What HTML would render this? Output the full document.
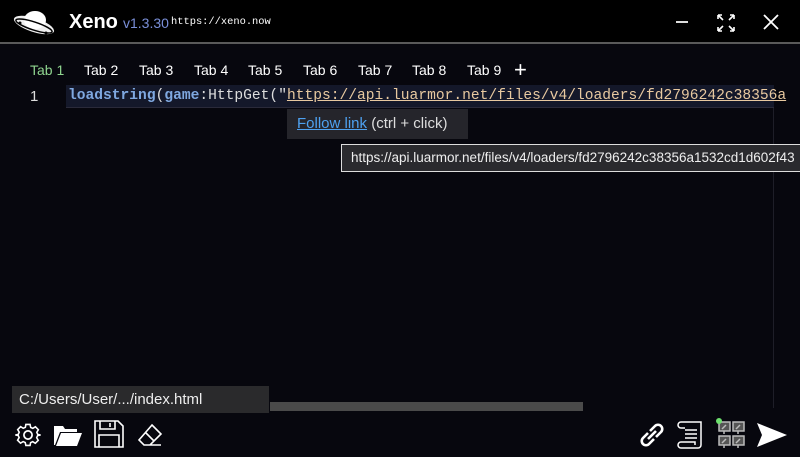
<!DOCTYPE html>
<html><head><meta charset="utf-8"><style>
*{margin:0;padding:0;box-sizing:border-box}
body{width:800px;height:457px;background:#000;overflow:hidden;position:relative;font-family:"Liberation Sans",sans-serif;color:#fff}
.abs{position:absolute}
.hr{left:0;top:42px;width:800px;height:2px;background:#5a5a5a}
.editor{left:0;top:44px;width:800px;height:413px;background:#07070e}
.tab{top:62px;font-size:14px;color:#fff}
.mono{font-family:"Liberation Mono",monospace;font-size:14.6px;white-space:pre}
</style></head><body>
<div class="abs editor"></div>
<div class="abs hr"></div>
<svg class="abs" style="left:10px;top:9px" width="48" height="28" viewBox="0 0 48 28">
<ellipse cx="24" cy="16" rx="21" ry="7" transform="rotate(18 24 16)" fill="#eee"/>
<ellipse cx="25" cy="11" rx="11" ry="9" fill="#fff"/>
<ellipse cx="24" cy="17" rx="19" ry="4" transform="rotate(18 24 17)" fill="none" stroke="#000" stroke-width="1.5"/>
<circle cx="10" cy="14" r="1.5" fill="#000"/><circle cx="36" cy="24" r="1.5" fill="#000"/><circle cx="45" cy="20" r="1.3" fill="#000"/>
</svg>
<div class="abs" style="left:69px;top:11px;font-size:20px;font-weight:bold">Xeno</div>
<div class="abs" style="left:123px;top:15px;font-size:14px;color:#7a8fd8">v1.3.30</div>
<div class="abs" style="left:171px;top:16px;font-size:10.4px;font-family:'Liberation Mono',monospace">https://xeno.now</div>
<div class="abs" style="left:676px;top:21px;width:12px;height:1.5px;background:#ddd"></div>
<svg class="abs" style="left:716px;top:13px" width="20" height="20" viewBox="0 0 20 20" stroke="#fff" stroke-width="1.6" fill="none">
<path d="M2 2l5 5M2 2h4M2 2v4M18 2l-5 5M18 2h-4M18 2v4M2 18l5-5M2 18h4M2 18v-4M18 18l-5-5M18 18h-4M18 18v-4"/></svg>
<svg class="abs" style="left:763px;top:14px" width="16" height="16" viewBox="0 0 16 16" stroke="#fff" stroke-width="1.8"><path d="M1 1l14 14M15 1L1 15"/></svg>
<div class="abs tab" style="left:30px;color:#8fd48f">Tab 1</div>
<div class="abs tab" style="left:84px">Tab 2</div>
<div class="abs tab" style="left:139px">Tab 3</div>
<div class="abs tab" style="left:194px">Tab 4</div>
<div class="abs tab" style="left:248px">Tab 5</div>
<div class="abs tab" style="left:303px">Tab 6</div>
<div class="abs tab" style="left:358px">Tab 7</div>
<div class="abs tab" style="left:412px">Tab 8</div>
<div class="abs tab" style="left:467px">Tab 9</div>
<div class="abs" style="left:514px;top:57px;font-size:22px">+</div>
<div class="abs" style="left:66px;top:85px;width:708px;height:23px;background:#14182a;border-bottom:1px solid #2a2a3a"></div>
<div class="abs" style="left:30px;top:88px;font-size:15px;color:#ddd">1</div>
<div class="abs mono" style="left:68px;top:88px;color:#ddd"><b style="color:#7fa8e0">loadstring</b>(<b style="color:#7fa8e0">game</b>:HttpGet("<span style="color:#e8c9a0;text-decoration:underline">https://api.luarmor.net/files/v4/loaders/fd2796242c38356a</span></div>
<div class="abs" style="left:773px;top:108px;width:1px;height:300px;background:#1e1e28"></div>
<div class="abs" style="left:287px;top:109px;width:181px;height:30px;background:#25252b;font-size:15px;padding:6px 10px;color:#ddd"><span style="color:#4ea1f0;text-decoration:underline">Follow link</span> (ctrl + click)</div>
<div class="abs" style="left:341px;top:144px;width:470px;height:28px;background:#2a2a2e;border:1px solid #ddd;font-size:13.5px;padding:5px 9px;color:#eee;white-space:nowrap;overflow:hidden">https://api.luarmor.net/files/v4/loaders/fd2796242c38356a1532cd1d602f43</div>
<div class="abs" style="left:270px;top:402px;width:313px;height:9px;background:#4a4a4a"></div>
<div class="abs" style="left:12px;top:386px;width:257px;height:27px;background:#2a2a2c;font-size:15px;padding:5px 7px;color:#eee">C:/Users/User/.../index.html</div>
<svg class="abs" style="left:14px;top:421px" width="28" height="28" viewBox="0 0 24 24" fill="none" stroke="#fff" stroke-width="1.5"><circle cx="12" cy="12" r="3.5"/><path d="M10 2h4l.6 2.8 2 .9 2.5-1.5 2.8 2.8-1.5 2.5.9 2L24 12v0l-2.8.6-.9 2 1.5 2.5-2.8 2.8-2.5-1.5-2 .9L14 22h-4l-.6-2.8-2-.9-2.5 1.5-2.8-2.8 1.5-2.5-.9-2L0 12l2.8-.6.9-2-1.5-2.5 2.8-2.8 2.5 1.5 2-.9z" transform="scale(.9) translate(1.3 1.3)"/></svg>
<svg class="abs" style="left:53px;top:423px" width="30" height="24" viewBox="0 0 30 24" fill="#fff"><path d="M1 3h9l2 3h12v3H7L2 22H1z"/><path d="M8 10h21l-5 13H3z"/></svg>
<svg class="abs" style="left:94px;top:420px" width="30" height="28" viewBox="0 0 30 28" fill="none" stroke="#fff" stroke-width="1.6"><path d="M1 1h23l5 5v21H1z"/><path d="M6 1v8h15V1M16 3v4M5 27V15h20v12"/></svg>
<svg class="abs" style="left:137px;top:423px" width="26" height="24" viewBox="0 0 26 24" fill="none" stroke="#fff" stroke-width="1.6"><path d="M15 2l9 9-11 11H7l-5-5zM8 9l9 9M13 22h11"/></svg>
<svg class="abs" style="left:638px;top:421px" width="28" height="28" viewBox="0 0 28 28" fill="none" stroke="#fff" stroke-width="2.6"><path d="M12 10l5-5a4 4 0 016 6l-5 5M16 18l-5 5a4 4 0 01-6-6l5-5M10 18l8-8"/></svg>
<svg class="abs" style="left:677px;top:420px" width="30" height="30" viewBox="0 0 30 30" fill="none" stroke="#fff" stroke-width="1.5"><path d="M4 2h20v23a3 3 0 01-3 3H4a3 3 0 010-6h14v3M4 2a3 3 0 000 6h4M8 10h12M8 14h12M8 18h12"/></svg>
<svg class="abs" style="left:715px;top:418px" width="32" height="32" viewBox="0 0 32 32" fill="#555" stroke="#bbb" stroke-width="1.5"><rect x="4" y="4" width="11" height="9"/><rect x="18" y="4" width="11" height="9"/><rect x="4" y="18" width="11" height="9"/><rect x="18" y="18" width="11" height="9"/><path d="M7 11l4-4M21 11l4-4M7 25l4-4M21 25l4-4M9 13v3M23 13v3M9 27v3M23 27v3"/><circle cx="4" cy="3" r="3" fill="#6ee06e" stroke="none"/></svg>
<svg class="abs" style="left:757px;top:423px" width="30" height="24" viewBox="0 0 30 24" fill="#fff"><path d="M0 0l30 12L0 24l5-12z"/></svg>
</body></html>
